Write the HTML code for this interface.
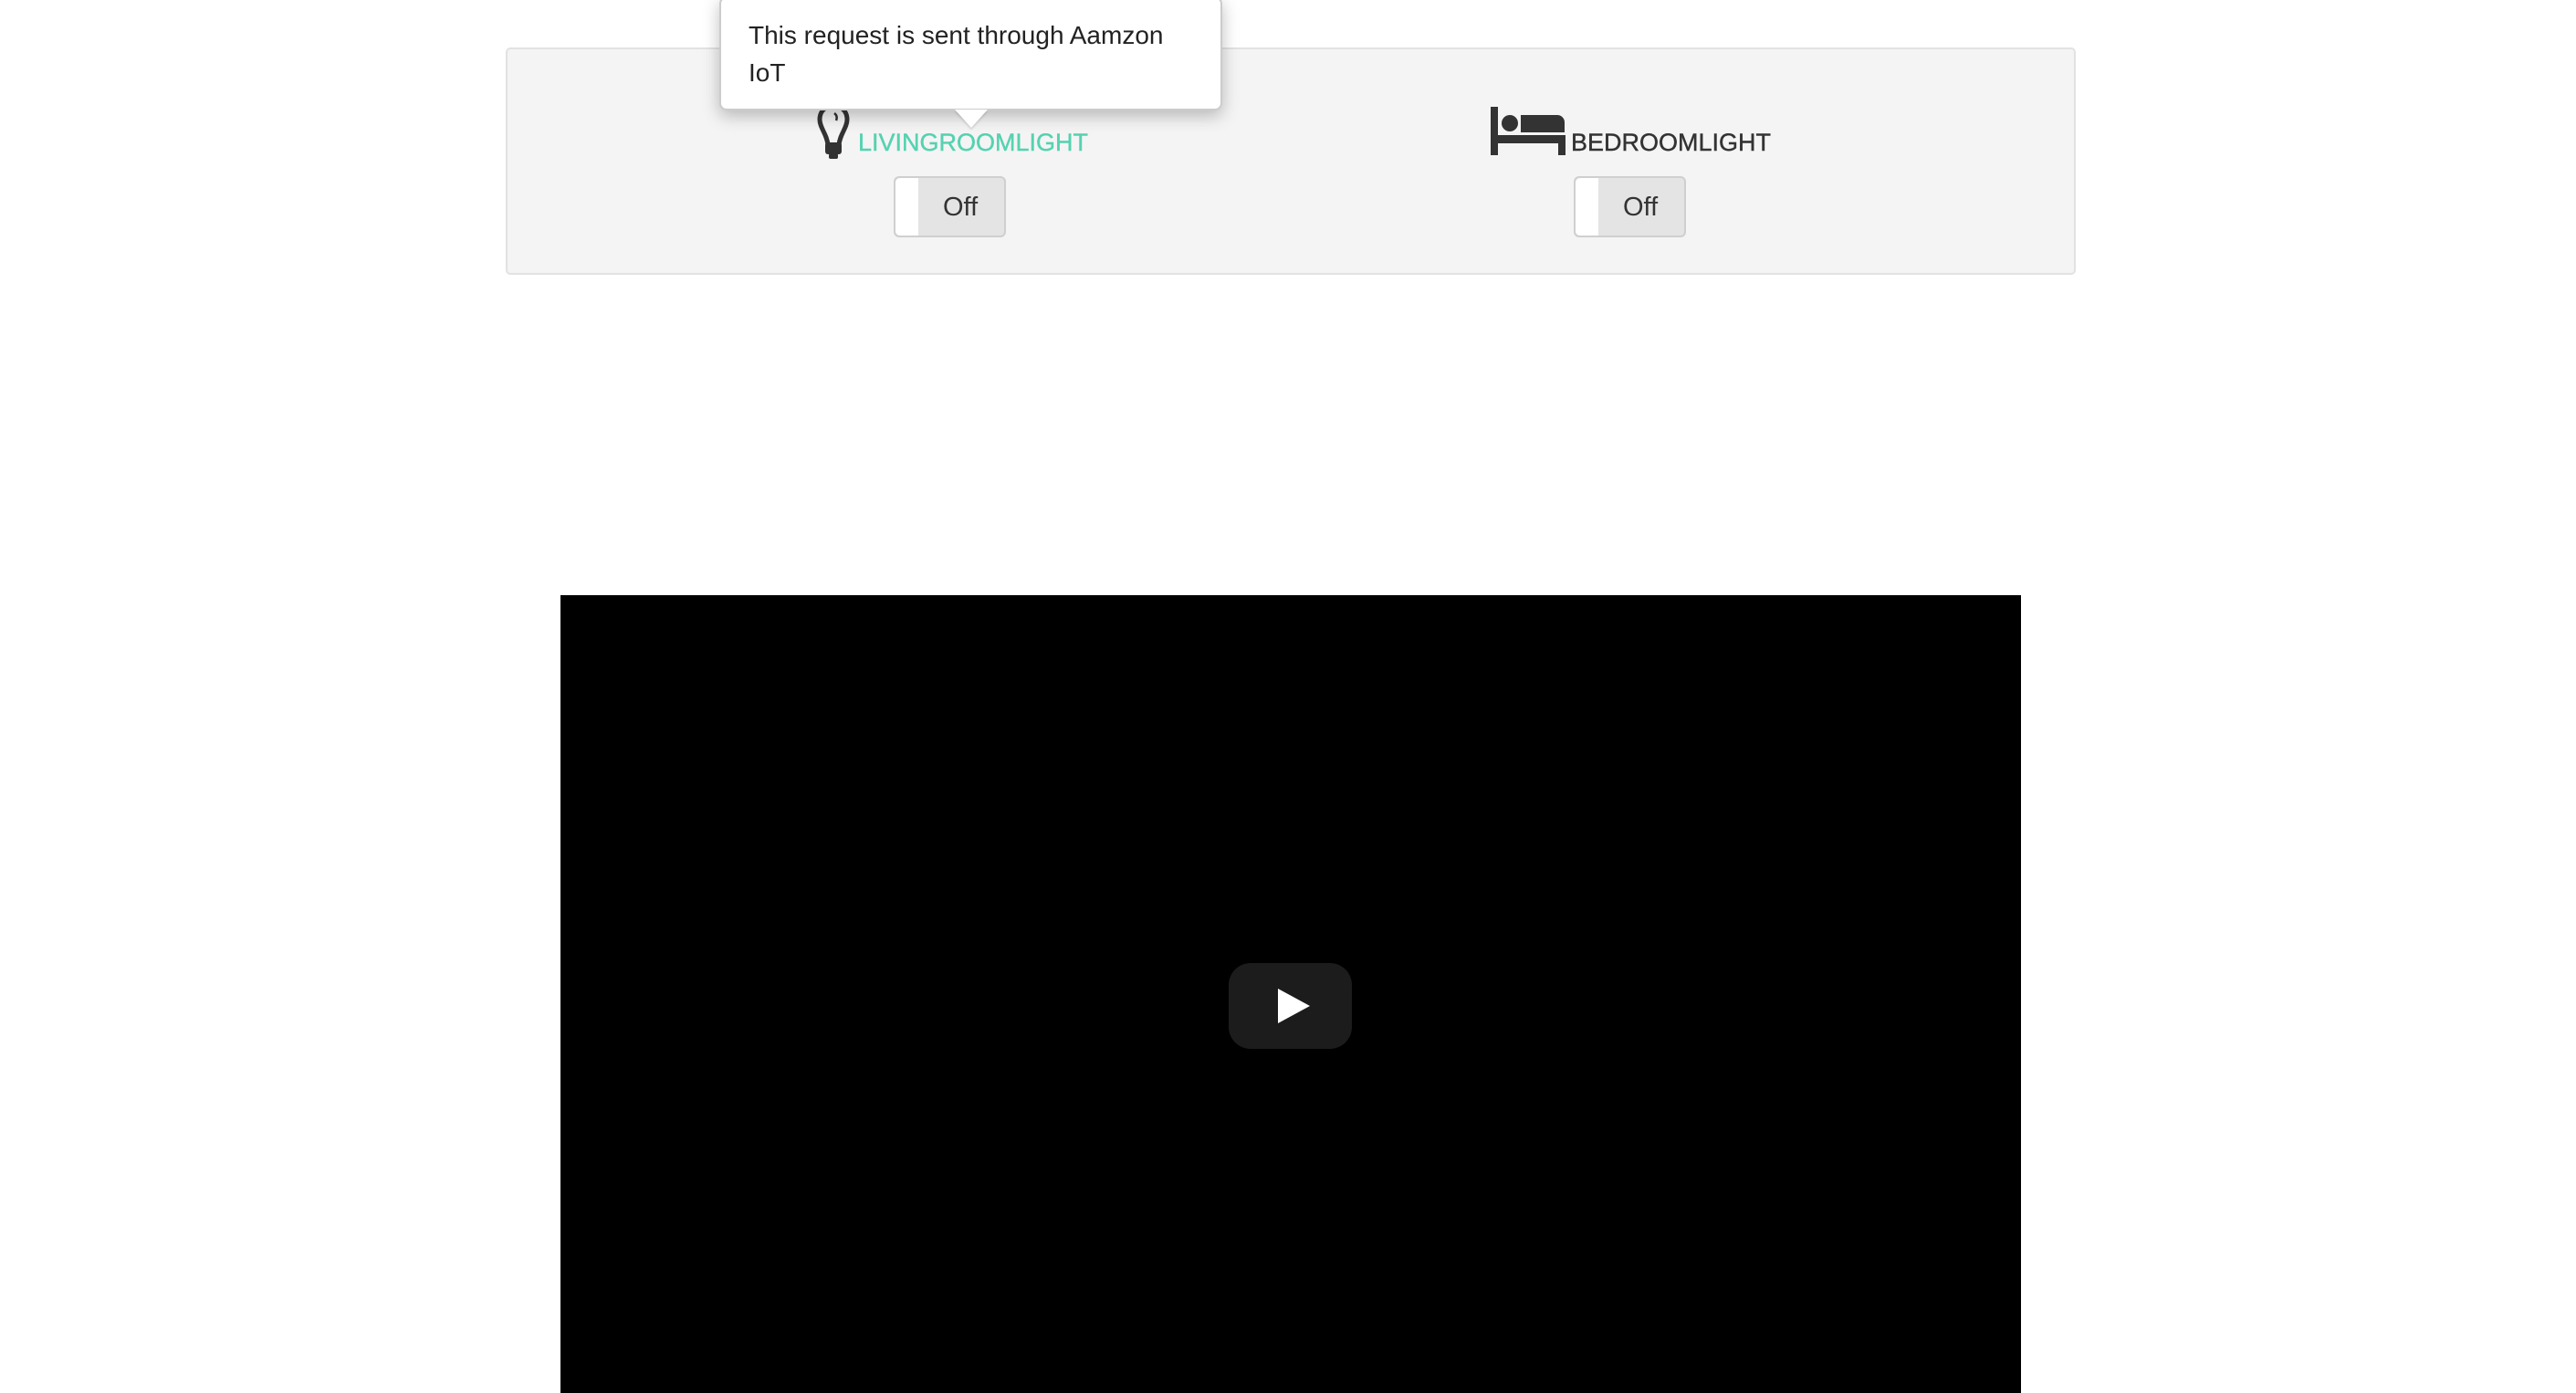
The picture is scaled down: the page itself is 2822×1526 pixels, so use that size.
<!DOCTYPE html>
<html><head><meta charset="utf-8"><style>
html,body{margin:0;padding:0;background:#fff;width:2822px;height:1526px;overflow:hidden;font-family:"Liberation Sans",sans-serif;position:relative}
.panel{position:absolute;left:554px;top:52px;width:1716px;height:245px;background:#f4f4f4;border:2px solid #e2e2e2;border-radius:5px}
.lbl{position:absolute;font-size:27px;white-space:nowrap;top:141px;-webkit-text-stroke:0.4px currentColor}
.tog{position:absolute;top:193px;width:123px;height:67px;background:#e4e4e4;border:2px solid #cfcfcf;border-radius:6px;box-sizing:border-box}
.tog .k{position:absolute;left:0;top:0;width:25px;height:63px;background:#fff;border-radius:5px 0 0 5px}
.tog span{position:absolute;left:52px;top:16px;font-size:29px;color:#333}
.tip{position:absolute;left:788px;top:-4px;width:551px;height:125px;background:#fff;border:2px solid #ccc;border-radius:8px;box-shadow:0 6px 18px rgba(0,0,0,.25);box-sizing:border-box}
.tip p{margin:0;position:absolute;left:30px;top:20px;width:500px;font-size:28px;line-height:41px;color:#222}
.arr{position:absolute;left:1046px;top:120px;width:0;height:0;border-left:18px solid transparent;border-right:18px solid transparent;border-top:20px solid #fff;filter:drop-shadow(0 2px 1px rgba(0,0,0,.15))}
.video{position:absolute;left:614px;top:652px;width:1600px;height:874px;background:#000}
.play{position:absolute;left:1346px;top:1055px;width:135px;height:94px;background:#1c1c1c;border-radius:24px}
</style></head><body>
<div class="panel"></div>
<svg style="position:absolute;left:893px;top:113px" width="40" height="62" viewBox="0 0 40 62"><path d="M20 3C10 3 5 10 5 18c0 9 8 16 9 28h12c1-12 9-19 9-28C35 10 30 3 20 3z" fill="none" stroke="#333" stroke-width="5"/><path d="M21 11q4 3 2 8" stroke="#333" stroke-width="2.5" fill="none"/><rect x="11" y="43" width="18" height="13" rx="3" fill="#333"/><rect x="15" y="55" width="10" height="6" rx="2" fill="#333"/></svg>
<div class="lbl" style="left:940px;color:#55d2b1">LIVINGROOMLIGHT</div>
<svg style="position:absolute;left:1633px;top:117px" width="82" height="54" viewBox="0 0 82 54"><rect x="0" y="0" width="8" height="53" fill="#333"/><circle cx="21" cy="18" r="9" fill="#333"/><path d="M33 9h40a8 8 0 0 1 8 8v11H33z" fill="#333"/><rect x="0" y="31" width="82" height="9" fill="#333"/><rect x="74" y="31" width="8" height="22" fill="#333"/></svg>
<div class="lbl" style="left:1721px;color:#333">BEDROOMLIGHT</div>
<div class="tog" style="left:979px"><div class="k"></div><span>Off</span></div>
<div class="tog" style="left:1724px"><div class="k"></div><span>Off</span></div>
<div class="tip"><p>This request is sent through Aamzon IoT</p></div>
<div class="arr"></div>
<div class="video"></div>
<div class="play"><svg style="position:absolute;left:52px;top:26px" width="40" height="42" viewBox="0 0 40 42"><path d="M2 2L37 21L2 40z" fill="#fff"/></svg></div>
</body></html>
